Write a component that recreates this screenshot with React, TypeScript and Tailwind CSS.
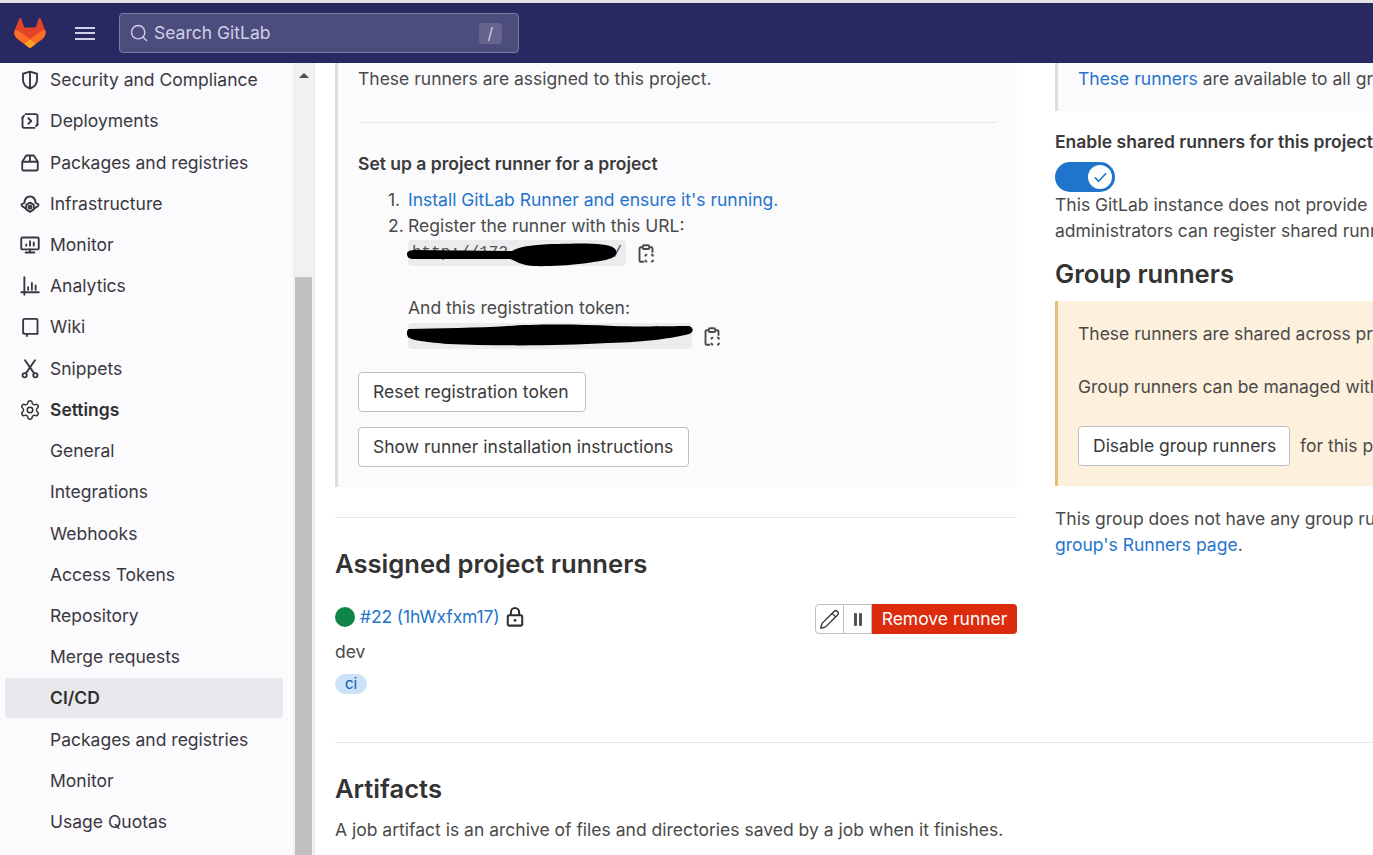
import type { ReactNode } from "react";
import { Pencil, Search, Settings } from "lucide-react";

const font = { fontFamily: "Inter, 'Noto Sans', sans-serif" };

function Ico({ children }: { children: ReactNode }) {
    return (
        <svg
            viewBox="0 0 16 16"
            fill="none"
            stroke="currentColor"
            strokeWidth="1.5"
            strokeLinecap="round"
            strokeLinejoin="round"
            className="h-5 w-5 shrink-0"
        >
            {children}
        </svg>
    );
}

function Logo() {
    return (
        <svg viewBox="0 0 25 24" className="h-[30px] w-[32px]">
            <path d="m24.507 9.5-.034-.09L21.082.562a.896.896 0 0 0-1.694.091l-2.29 7.01H7.825L5.535.653a.898.898 0 0 0-1.694-.09L.451 9.411.416 9.5a6.297 6.297 0 0 0 2.09 7.278l.012.01.03.022 5.16 3.867 2.56 1.935 1.554 1.176a1.051 1.051 0 0 0 1.268 0l1.555-1.176 2.56-1.935 5.197-3.89.014-.01A6.297 6.297 0 0 0 24.507 9.5Z" fill="#E24329" />
            <path d="m24.507 9.5-.034-.09a11.44 11.44 0 0 0-4.56 2.051l-7.447 5.632 4.742 3.584 5.197-3.89.014-.01A6.297 6.297 0 0 0 24.507 9.5Z" fill="#FC6D26" />
            <path d="m7.707 20.677 2.56 1.935 1.555 1.176a1.051 1.051 0 0 0 1.268 0l1.555-1.176 2.56-1.935-4.743-3.584-4.755 3.584Z" fill="#FCA326" />
            <path d="M5.01 11.461a11.43 11.43 0 0 0-4.56-2.05L.416 9.5a6.297 6.297 0 0 0 2.09 7.278l.012.01.03.022 5.16 3.867 4.745-3.584-7.444-5.632Z" fill="#FC6D26" />
        </svg>
    );
}

function ClipboardIcon() {
    return (
        <svg viewBox="0 0 16 16" fill="none" stroke="#4a4a4a" strokeWidth="1.5" className="mt-[2px] h-5 w-5 shrink-0">
            <path d="M6.5 14.2H3.8a1 1 0 0 1-1-1V3.6a1 1 0 0 1 1-1h1.4M10.8 2.6h1.4a1 1 0 0 1 1 1V7" />
            <rect x="5.4" y="1" width="5.2" height="3" rx="1" />
            <path d="M9 8.5H8.300a.7.7 0 0 0-.7.7V10M12 8.500h.8a.7.7 0 0 1 .7.7V10M7.600 12.500v.9a.7.7 0 0 0 .7.7H9M13.500 12.500v.9a.7.7 0 0 1-.7.7H12" />
        </svg>
    );
}

const icons: Record<string, ReactNode> = {
    shield: <path d="M8 1.3 13.6 3v5c0 3.2-2.4 5.6-5.6 6.8C4.8 13.6 2.4 11.200 2.400 8V3ZM8 1.800v12.400" />,
    deploy: (
        <>
            <path d="M4.500 2.500h8A1.500 1.500 0 0 1 14 4v7" />
            <path d="M11.500 13.500h-8A1.500 1.500 0 0 1 2 12V5" />
            <path d="M2 5.500 3.200 3.800M14 10.500l-1.200 1.700" />
            <path d="m6.700 5.800 2.300 2.200-2.300 2.200" />
        </>
    ),
    pkg: <path d="M1.800 7 5 2h6l3.200 5v6a1 1 0 0 1-1 1H2.800a1 1 0 0 1-1-1ZM1.800 7h12.400M8 2v5" />,
    infra: (
        <>
            <path d="M4.500 11.500 1.800 9.800a1.100 1.100 0 0 1 .2-2L3.500 7.200C3.800 3.800 5.700 2 8 2s4.200 1.800 4.500 5.200l1.500.6a1.100 1.100 0 0 1 .2 2l-2.700 1.700" />
            <circle cx="8" cy="10.500" r="1.100" />
            <path d="M8 6.900 11 8.700v3.600L8 14.300 5 12.300V8.700Z" />
        </>
    ),
    monitor: (
        <>
            <rect x="1" y="2" width="14" height="9.500" rx="1" />
            <path d="M8 11.500V14M4.500 14h7M5 8.500V7.500M8 8.500V5M11 8.500V6" />
        </>
    ),
    analytics: <path d="M3.500 1v14M1 13h14M6.500 11V9M9.500 11V5.500M12.500 11V7.500" />,
    wiki: <path d="M2.500 13V2.500a1 1 0 0 1 1-1h9.500a1 1 0 0 1 1 1V13.500H4a1.500 1.500 0 0 1-1.500-1.500M5.500 14v1.200" />,
    snippets: (
        <>
            <circle cx="3.700" cy="13" r="1.700" />
            <circle cx="12.300" cy="13" r="1.700" />
            <path d="M11.300 11.500 4 1M4.700 11.500 12 1" />
        </>
    ),
};

const topNav = [
    { label: "Security and Compliance", icon: "shield" },
    { label: "Deployments", icon: "deploy" },
    { label: "Packages and registries", icon: "pkg" },
    { label: "Infrastructure", icon: "infra" },
    { label: "Monitor", icon: "monitor" },
    { label: "Analytics", icon: "analytics" },
    { label: "Wiki", icon: "wiki" },
    { label: "Snippets", icon: "snippets" },
];

const subNav = ["General", "Integrations", "Webhooks", "Access Tokens", "Repository", "Merge requests", "CI/CD", "Packages and registries", "Monitor", "Usage Quotas"];

function Sidebar() {
    return (
        <aside className="flex w-[315px] shrink-0 bg-[#fbfafd]">
            <nav className="mt-[-3.500px] w-[293px] shrink-0 text-[#3a383f]">
                {topNav.map((item) => (
                    <div key={item.label} className="flex h-[41.22px] items-center gap-[10px] pl-[20px]">
                        <Ico>{icons[item.icon]}</Ico>
                        <span>{item.label}</span>
                    </div>
                ))}
                <div className="flex h-[41.22px] items-center gap-[9px] pl-[19px] font-semibold text-[#303030]">
                    <Settings className="h-[22px] w-[22px]" strokeWidth={1.600} />
                    <span>Settings</span>
                </div>
                {subNav.map((label) => (
                    <div key={label} className="flex h-[41.22px] items-center pl-[5px] pr-[10px]">
                        <div className={label === "CI/CD" ? "flex h-[40px] w-full items-center rounded bg-[#e9e8ec] pl-[45px] font-semibold text-[#303030]" : "flex h-[40px] w-full items-center pl-[45px]"}>
                            {label}
                        </div>
                    </div>
                ))}
            </nav>
            <div className="flex w-[22px] shrink-0 flex-col border-r border-[#e6e6e6] bg-[#f1f1f1] pl-[2px] pr-[2px]">
                <div className="mx-auto mt-[10px] h-0 w-0 border-x-[5px] border-b-[5px] border-x-transparent border-b-[#505050]" />
                <div className="mt-auto h-[578px] bg-[#c1c1c1]" />
            </div>
        </aside>
    );
}

function Button({ width, children }: { width: string; children: ReactNode }) {
    return (
        <button className={`flex h-10 items-center rounded border border-[#bfbfc3] bg-white pl-[14px] text-[17.500px] text-[#3a3a3a] ${width}`}>
            {children}
        </button>
    );
}

function LeftColumn() {
    return (
        <div className="w-[682px] shrink-0">
            <div className="border-l-[3px] border-[#dcdcde] bg-[#fbfafd] pb-[20px] pl-[20px] pr-[20px] pt-[3px]">
                <p>These runners are assigned to this project.</p>
                <hr className="mt-[30px] border-[#e9e8ec]" />
                <p className="mt-[28px] font-semibold text-[#3a3a3a]">Set up a project runner for a project</p>
                <ol className="mt-[10px] list-none pl-[50px]">
                    <li className="relative">
                        <span className="absolute left-[-20px]">1.</span>
                        <a className="text-[#1f75cb]">Install GitLab Runner and ensure it's running.</a>
                    </li>
                    <li className="relative">
                        <span className="absolute left-[-20px]">2.</span>
                        Register the runner with this URL:
                        <div className="mt-[1px] flex items-center gap-[10px]">
                            <div className="relative flex h-[26px] w-[218px] items-center justify-between rounded bg-[#ececef] px-[4px] text-[16px] text-[#525252]" style={{ fontFamily: "'Liberation Mono', monospace" }}>
                                <span>http://172</span>
                                <span>/</span>
                                <svg viewBox="0 0 218 26" className="absolute left-0 top-0 h-[26px] w-[218px] overflow-visible">
                                    <path d="M-1 14 C-1 11 2 10 8 10 L104 11 C112 6 130 4 150 4 C175 3 200 3 206 8 C210 11 209 15 204 18 C190 23 150 27 125 26 C112 25 108 21 102 19 L6 19 C1 19 -1 17 -1 14Z" fill="#000" />
                                </svg>
                            </div>
                            <ClipboardIcon />
                        </div>
                        <div className="mt-[29px]">And this registration token:</div>
                        <div className="mt-[2px] flex items-center gap-[10px]">
                            <div className="relative h-[26px] w-[284px] rounded bg-[#ececef]">
                                <svg viewBox="0 0 284 26" className="absolute left-0 top-0 h-[26px] w-[284px] overflow-visible">
                                    <path d="M1 6 C30 5 70 5 100 3 C125 1 170 1 205 3 C235 4 262 3 281 3 C286 5 286 9 281 11 C265 15 240 19 200 20 C150 23 90 23 40 21 C20 19 4 18 0 14 C-2 10 -1 7 1 6Z" fill="#000" />
                                </svg>
                            </div>
                            <ClipboardIcon />
                        </div>
                    </li>
                </ol>
                <div className="mt-[23px] flex flex-col gap-[15px]">
                    <Button width="w-[228px]">Reset registration token</Button>
                    <Button width="w-[331px]">Show runner installation instructions</Button>
                </div>
            </div>
            <hr className="mt-[30px] border-[#e9e8ec]" />
            <h2 className="mt-[30px] text-[25.600px] font-semibold leading-[32px] text-[#333]">Assigned project runners</h2>
            <div className="mt-[24px] flex items-start justify-between">
                <div className="flex h-[26px] items-center">
                    <span className="h-5 w-5 rounded-full bg-[#108548]" />
                    <a className="ml-[5px] tracking-[-0.130px] text-[#1f75cb]">#22 (1hWxfxm17)</a>
                    <svg viewBox="0 0 16 16" fill="none" stroke="#303030" strokeWidth="1.500" className="ml-[4px] h-[22px] w-[22px]">
                        <rect x="2.750" y="6.750" width="10.500" height="7.500" rx="1" />
                        <path d="M5 6.500V4.500a3 3 0 0 1 6 0v2" />
                        <circle cx="8" cy="10.500" r="1" fill="#303030" stroke="none" />
                    </svg>
                </div>
                <div className="flex h-[30px]">
                    <div className="flex w-[29px] items-center justify-center rounded-l border border-[#bfbfc3] bg-white text-[#303030]">
                        <Pencil className="h-[21px] w-[21px]" strokeWidth={1.500} />
                    </div>
                    <div className="flex w-[28px] items-center justify-center border-y border-r border-[#bfbfc3] bg-white">
                        <span className="flex gap-[2px]">
                            <span className="h-[13px] w-[3px] rounded-[1px] bg-[#525252]" />
                            <span className="h-[13px] w-[3px] rounded-[1px] bg-[#525252]" />
                        </span>
                    </div>
                    <div className="flex w-[145px] items-center justify-center rounded-r bg-[#dd2b0e] text-white">Remove runner</div>
                </div>
            </div>
            <p className="mt-[5px]">dev</p>
            <span className="mt-[9px] flex h-5 w-8 items-center justify-center rounded-full bg-[#cbe2f9] text-[15px] text-[#0b5cad]">ci</span>
        </div>
    );
}

function RightColumn() {
    return (
        <div className="w-[520px] shrink-0 whitespace-nowrap">
            <div className="h-[48px] border-l-[3px] border-[#dcdcde] bg-[#fbfafd] pl-[20px] pt-[3px]">
                <a className="text-[#1f75cb]">These runners</a> are available to all groups and projects.
            </div>
            <p className="mt-[18px] font-semibold text-[#3a3a3a]">Enable shared runners for this project</p>
            <div className="mt-[7px] flex h-[30px] w-[60px] items-center justify-end rounded-full bg-[#1f75cb] pr-[3px]">
                <span className="flex h-6 w-6 items-center justify-center rounded-full bg-white">
                    <svg viewBox="0 0 16 16" fill="none" stroke="#1f75cb" strokeWidth="1.800" strokeLinecap="round" strokeLinejoin="round" className="h-[15px] w-[15px]">
                        <path d="m2.500 8.500 3.500 3.500 7.500-8" />
                    </svg>
                </span>
            </div>
            <p>This GitLab instance does not provide any shared runners yet.</p>
            <p>administrators can register shared runners in the admin area.</p>
            <h2 className="mt-[14px] text-[25.600px] font-semibold leading-[32px] text-[#333]">Group runners</h2>
            <div className="mt-[11px] h-[185px] border-l-[3px] border-[#e9be74] bg-[#fdf1dd] pl-[20px] pt-[20px]">
                <p>These runners are shared across projects in this group.</p>
                <p className="mt-[27px]">Group runners can be managed with the Runners API.</p>
                <div className="mt-[26px] flex items-center gap-[10px]">
                    <Button width="w-[212px]">Disable group runners</Button>
                    <span>for this project</span>
                </div>
            </div>
            <p className="mt-[20px]">This group does not have any group runners yet. Go to</p>
            <p>
                <a className="text-[#1f75cb]">group's Runners page</a>.
            </p>
        </div>
    );
}

export default function App() {
    return (
        <div className="flex h-[855px] flex-col overflow-hidden bg-white text-[17.500px] leading-[26px] text-[#4a4a4a]" style={font}>
            <div className="h-[3px] shrink-0 bg-[#e3e3e6]" />
            <header className="flex h-[60px] shrink-0 items-center bg-[#292961]">
                <div className="ml-[14px] flex">
                    <Logo />
                </div>
                <div className="ml-[29px] flex w-5 flex-col gap-[3.500px]">
                    <span className="h-[2px] bg-[#d1d0e8]" />
                    <span className="h-[2px] bg-[#d1d0e8]" />
                    <span className="h-[2px] bg-[#d1d0e8]" />
                </div>
                <div className="ml-[24px] flex h-10 w-[400px] items-center rounded border border-[#7c7ca3] bg-[#4d4d7d] pl-[9px] pr-[16px] text-[#cfcfe8]">
                    <Search className="h-[20px] w-[20px]" strokeWidth={1.700} />
                    <span className="ml-[5px]">Search GitLab</span>
                    <span className="ml-auto flex h-[21px] w-[23px] items-center justify-center rounded-[3px] bg-[#64648f] text-[16px]">/</span>
                </div>
            </header>
            <div className="flex min-h-0 flex-1">
                <Sidebar />
                <main className="min-w-0 flex-1 overflow-hidden pl-[20px]">
                    <div className="flex gap-[38px]">
                        <LeftColumn />
                        <RightColumn />
                    </div>
                    <hr className="mt-[48px] border-[#e9e8ec]" />
                    <h2 className="mt-[30px] text-[25.600px] font-semibold leading-[32px] text-[#333]">Artifacts</h2>
                    <p className="mt-[12px]">A job artifact is an archive of files and directories saved by a job when it finishes.</p>
                </main>
            </div>
        </div>
    );
}
